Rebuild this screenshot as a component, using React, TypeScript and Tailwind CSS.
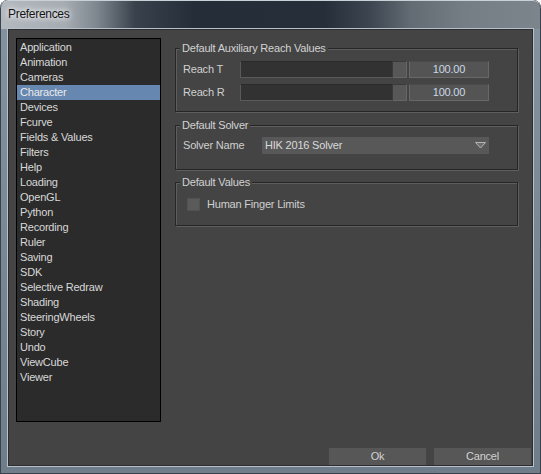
import React from "react";

const items = [
  "Application",
  "Animation",
  "Cameras",
  "Character",
  "Devices",
  "Fcurve",
  "Fields & Values",
  "Filters",
  "Help",
  "Loading",
  "OpenGL",
  "Python",
  "Recording",
  "Ruler",
  "Saving",
  "SDK",
  "Selective Redraw",
  "Shading",
  "SteeringWheels",
  "Story",
  "Undo",
  "ViewCube",
  "Viewer",
];

function Group({
  title,
  className,
  children,
}: {
  title: string;
  className?: string;
  children: React.ReactNode;
}) {
  return (
    <fieldset
      className={
        "w-[343px] border border-[#262626] shadow-[inset_1px_1px_0_#5e5e5e,1px_1px_0_#5e5e5e] " +
        (className ?? "")
      }
    >
      <legend className="ml-[4px] px-[2px] bg-[#444444] text-[11px] leading-[14px] text-[#d2d2d2]">
        {title}
      </legend>
      {children}
    </fieldset>
  );
}

function SliderRow({ label }: { label: string }) {
  return (
    <div className="flex items-center h-[17px]">
      <div className="w-[57px] text-[11px] text-[#d0d0d0]">{label}</div>
      <div className="flex w-[167px] h-[17px]">
        <div className="flex-1 bg-[#323232] border-t border-[#2a2a2a] border-l border-b border-l-[#5a5a5a] border-b-[#5a5a5a]" />
        <div className="w-[15px] bg-[#575757] border border-[#3a3a3a] border-r-[#666666] border-b-[#666666]" />
      </div>
      <div className="ml-[2px] w-[80px] h-[17px] bg-[#545454] border border-[#686868] border-t-[#4a4a4a] flex items-center justify-center text-[11px] text-[#cad8e6]">
        100.00
      </div>
    </div>
  );
}

export default function App() {
  return (
    <div className="w-[541px] h-[474px] flex flex-col rounded-t-[8px] bg-[linear-gradient(to_bottom,#8593a0,#6f7d8a)] shadow-[inset_0_0_0_1px_#39424c] font-['Liberation_Sans',sans-serif] tracking-[-0.2px] overflow-hidden">
      <div className="h-[29px] shrink-0 flex items-center pl-[8px] rounded-t-[8px] bg-[linear-gradient(to_right,#b3b9bf_0%,#a6acb2_12%,#7d868e_18%,#39424c_25%,#252e38_36%,#262f39_60%,#3b444f_68%,#636b73_76%,#757d85_86%,#7d858c_100%)] shadow-[inset_0_1px_0_#c9d0d6,inset_1px_0_0_#39424c,inset_-1px_0_0_#39424c]">
        <span className="text-[12px] tracking-[-0.3px] text-[#141414] [text-shadow:0_0_5px_#ffffff,0_0_9px_#ffffff] -mt-[2px]">
          Preferences
        </span>
      </div>
      <div className="mx-[8px] mb-[8px] flex-1 flex flex-col bg-[#444444] border border-[#2e2e2e] shadow-[0_0_0_1px_#b4c0cb]">
        <div className="flex items-start pl-[7px] pt-[8px]">
          <div className="w-[145px] h-[384px] shrink-0 border border-black bg-[#2b2b2b] flex flex-col pt-[1px]">
            {items.map((it) => (
              <div
                key={it}
                className={
                  it === "Character"
                    ? "h-[15px] leading-[15px] pl-[3px] text-[11px] bg-[#6688b0] text-[#eaeaea]"
                    : "h-[15px] leading-[15px] pl-[3px] text-[11px] text-[#d8d8d8]"
                }
              >
                {it}
              </div>
            ))}
          </div>
          <div className="ml-[14px] mt-[3px] flex flex-col">
            <Group title="Default Auxiliary Reach Values">
              <div className="pl-[7px] pt-[6px] pb-[10px] flex flex-col gap-[6px]">
                <SliderRow label="Reach T" />
                <SliderRow label="Reach R" />
              </div>
            </Group>
            <Group title="Default Solver" className="mt-[6px]">
              <div className="pl-[7px] pt-[5px] pb-[15px] flex items-center">
                <div className="w-[79px] text-[11px] text-[#d0d0d0]">Solver Name</div>
                <div className="w-[227px] h-[17px] bg-[#585858] flex items-center justify-between pl-[3px] pr-[3px] text-[11px] text-[#dadada]">
                  <span>HIK 2016 Solver</span>
                  <svg width="11" height="7" viewBox="0 0 11 7">
                    <path d="M0.5 0.5 L10.5 0.5 L5.5 6 Z" fill="#6e6e6e" stroke="#b4b4b4" strokeWidth="1" />
                  </svg>
                </div>
              </div>
            </Group>
            <Group title="Default Values" className="mt-[5px]">
              <div className="pl-[11px] pt-[9px] pb-[14px] flex items-center">
                <div className="w-[13px] h-[13px] bg-[#5a5a5a] border border-[#525252]" />
                <div className="ml-[7px] text-[11px] leading-[13px] text-[#d0d0d0]">
                  Human Finger Limits
                </div>
              </div>
            </Group>
          </div>
        </div>
        <div className="mt-auto flex justify-end gap-[8px] pr-[1px]">
          <button className="w-[97px] h-[17px] bg-[#575757] text-[11px] text-[#d2d2d2] flex items-center justify-center">
            Ok
          </button>
          <button className="w-[97px] h-[17px] bg-[#575757] text-[11px] text-[#d2d2d2] flex items-center justify-center">
            Cancel
          </button>
        </div>
      </div>
    </div>
  );
}
